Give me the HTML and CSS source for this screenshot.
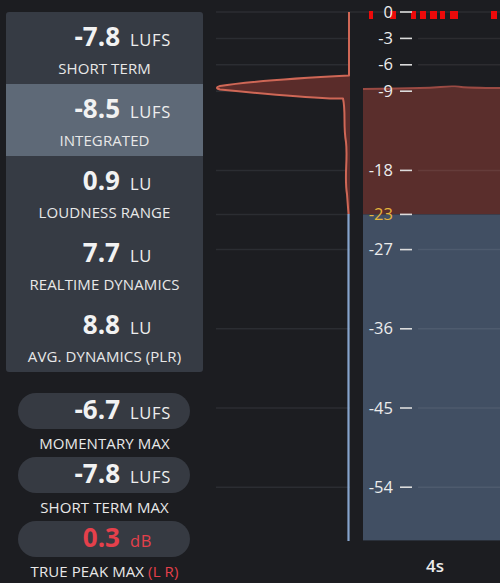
FILE: index.html
```html
<!DOCTYPE html>
<html>
<head>
<meta charset="utf-8">
<link rel="stylesheet" href="styles.css">
</head>
<body>
<div class="app">
  <div class="side">
    <div class="panel">
      <div class="row">
        <div class="val"><span class="num">-7.8</span><span class="unit">LUFS</span></div>
        <div class="label">SHORT TERM</div>
      </div>
      <div class="row row-hl">
        <div class="val"><span class="num">-8.5</span><span class="unit">LUFS</span></div>
        <div class="label">INTEGRATED</div>
      </div>
      <div class="row">
        <div class="val"><span class="num">0.9</span><span class="unit">LU</span></div>
        <div class="label">LOUDNESS RANGE</div>
      </div>
      <div class="row">
        <div class="val"><span class="num">7.7</span><span class="unit">LU</span></div>
        <div class="label">REALTIME DYNAMICS</div>
      </div>
      <div class="row">
        <div class="val"><span class="num">8.8</span><span class="unit">LU</span></div>
        <div class="label">AVG. DYNAMICS (PLR)</div>
      </div>
    </div>
    <div class="maxes">
      <div class="pill"><div class="val pval"><span class="num">-6.7</span><span class="unit">LUFS</span></div></div>
      <div class="plabel">MOMENTARY MAX</div>
      <div class="pill"><div class="val pval"><span class="num">-7.8</span><span class="unit">LUFS</span></div></div>
      <div class="plabel">SHORT TERM MAX</div>
      <div class="pill"><div class="val pval red"><span class="num">0.3</span><span class="unit">dB</span></div></div>
      <div class="plabel">TRUE PEAK MAX <span class="red">(L R)</span></div>
    </div>
  </div>
  <div class="chart">
    <svg class="graph" width="290" height="545" viewBox="210 0 290 545" xmlns="http://www.w3.org/2000/svg">
      <g stroke="#2b2d32" stroke-width="1.5">
        <line x1="216" y1="12" x2="350" y2="12"/>
        <line x1="216" y1="38.4" x2="350" y2="38.4"/>
        <line x1="216" y1="64.8" x2="350" y2="64.8"/>
        <line x1="216" y1="91.2" x2="350" y2="91.2"/>
        <line x1="216" y1="170.4" x2="350" y2="170.4"/>
        <line x1="216" y1="214.4" x2="350" y2="214.4"/>
        <line x1="216" y1="249.6" x2="350" y2="249.6"/>
        <line x1="216" y1="328.8" x2="350" y2="328.8"/>
        <line x1="216" y1="408" x2="350" y2="408"/>
        <line x1="216" y1="487.2" x2="350" y2="487.2"/>
      </g>
      <rect x="363" y="88" width="137" height="126.4" fill="#5a2e2c"/>
      <rect x="363" y="214.4" width="137" height="326" fill="#414f63"/>
      <path d="M363,89 C385,88.5 400,88.5 420,88 C440,87.5 445,86 455,86.5 C470,88 485,88 500,88" fill="none" stroke="#9a4a43" stroke-width="2"/>
      <g stroke="#ffffff" stroke-opacity="0.07" stroke-width="1.5">
        <line x1="350" y1="12" x2="500" y2="12"/>
        <line x1="418" y1="38.4" x2="500" y2="38.4"/>
        <line x1="418" y1="64.8" x2="500" y2="64.8"/>
        <line x1="418" y1="170.4" x2="500" y2="170.4"/>
        <line x1="418" y1="249.6" x2="500" y2="249.6"/>
        <line x1="418" y1="328.8" x2="500" y2="328.8"/>
        <line x1="418" y1="408" x2="500" y2="408"/>
        <line x1="418" y1="487.2" x2="500" y2="487.2"/>
      </g>
      <g fill="#ec0a0a">
        <rect x="369" y="11" width="4" height="8"/>
        <rect x="390" y="11" width="6" height="8"/>
        <rect x="411" y="11" width="5" height="8"/>
        <rect x="420" y="11" width="6" height="8"/>
        <rect x="430" y="11" width="7" height="8"/>
        <rect x="440" y="11" width="5" height="8"/>
        <rect x="450" y="11" width="8" height="8"/>
        <rect x="491" y="11" width="6" height="8"/>
      </g>
      <g class="scale" text-anchor="end">
        <text x="393" y="17.5">0</text>
        <text x="393" y="43.9">-3</text>
        <text x="393" y="70.3">-6</text>
        <text x="393" y="96.7">-9</text>
        <text x="393" y="175.9">-18</text>
        <text x="393" y="219.9" class="yel">-23</text>
        <text x="393" y="255.1">-27</text>
        <text x="393" y="334.3">-36</text>
        <text x="393" y="413.5">-45</text>
        <text x="393" y="492.7">-54</text>
      </g>
      <g stroke="#dcdcdc" stroke-width="1.6">
        <line x1="400" y1="12" x2="412" y2="12"/>
        <line x1="400" y1="38.4" x2="412" y2="38.4"/>
        <line x1="400" y1="64.8" x2="412" y2="64.8"/>
        <line x1="400" y1="91.2" x2="412" y2="91.2"/>
        <line x1="400" y1="170.4" x2="412" y2="170.4"/>
        <line x1="400" y1="214.4" x2="412" y2="214.4"/>
        <line x1="400" y1="249.6" x2="412" y2="249.6"/>
        <line x1="400" y1="328.8" x2="412" y2="328.8"/>
        <line x1="400" y1="408" x2="412" y2="408"/>
        <line x1="400" y1="487.2" x2="412" y2="487.2"/>
      </g>
      <path d="M349,75.5 C310,77.5 250,81 220,86 Q214,88 220,89.5 C250,92.5 300,97 330,98.5 L343,98.5 C346,112 343,126 346,142 C348,160 344,176 347,194 L348,214 L350,214 L350,75.5 Z" fill="#5a2c2a"/>
      <path d="M349,12 L349,75.5 C310,77.5 250,81 220,86 Q214,88 220,89.5 C250,92.5 300,97 330,98.5 L343,98.5 C346,112 343,126 346,142 C348,160 344,176 347,194 L348.5,214" fill="none" stroke="#cf6756" stroke-width="2" stroke-linejoin="round"/>
      <line x1="348.5" y1="214" x2="348.5" y2="541" stroke="#86a4cc" stroke-width="2.2"/>
    </svg>
    <div class="axis">4s</div>
  </div>
</div>
</body>
</html>
```
FILE: styles.css
```css
* { box-sizing: border-box; }
html, body {
  margin: 0;
  padding: 0;
  background: #1c1d21;
}
body {
  font-family: "Open Sans", "Noto Sans", sans-serif;
  color: #ececec;
  width: 500px;
  height: 583px;
  overflow: hidden;
}
.app {
  display: flex;
  height: 583px;
}
.side {
  width: 197px;
  margin-left: 6px;
  padding-top: 12px;
  flex: none;
}
.panel {
  background: #363b44;
  border-radius: 3px;
  overflow: hidden;
}
.row {
  height: 72px;
  padding-top: 9px;
  display: flex;
  flex-direction: column;
}
.row-hl {
  background: #5e6977;
}
.val {
  display: grid;
  grid-template-columns: 114px 1fr;
  column-gap: 10px;
  align-items: baseline;
  line-height: 30px;
}
.num {
  text-align: right;
  font-weight: 700;
  font-size: 26px;
  color: #f2f2f2;
}
.unit {
  font-size: 16.5px;
  letter-spacing: 0.7px;
  color: #eeeeee;
}
.label {
  text-align: center;
  font-size: 15px;
  letter-spacing: 0.1px;
  line-height: 20px;
  margin-top: 3px;
  color: #e8e8e8;
}
.maxes {
  margin-top: 21px;
  display: flex;
  flex-direction: column;
}
.pill {
  width: 172px;
  height: 36px;
  margin-left: 12px;
  border-radius: 18px;
  background: #363a42;
  display: flex;
  align-items: center;
}
.pval {
  width: 100%;
  grid-template-columns: 102px 1fr;
}
.plabel {
  height: 28px;
  line-height: 28px;
  text-align: center;
  font-size: 15px;
  letter-spacing: 0.1px;
  color: #e8e8e8;
}
.red, .red .num, .red .unit {
  color: #e5404b;
}
.chart {
  margin-left: 7px;
  flex: none;
  width: 290px;
  display: flex;
  flex-direction: column;
}
.graph {
  display: block;
}
.scale text {
  font-family: "Open Sans", "Noto Sans", sans-serif;
  font-size: 16.5px;
  fill: #ececec;
}
.scale text.yel {
  fill: #e6b53c;
}
.axis {
  padding-top: 11px;
  padding-left: 216px;
  line-height: 20px;
  font-size: 17px;
  font-weight: 600;
  color: #ececec;
}
```
